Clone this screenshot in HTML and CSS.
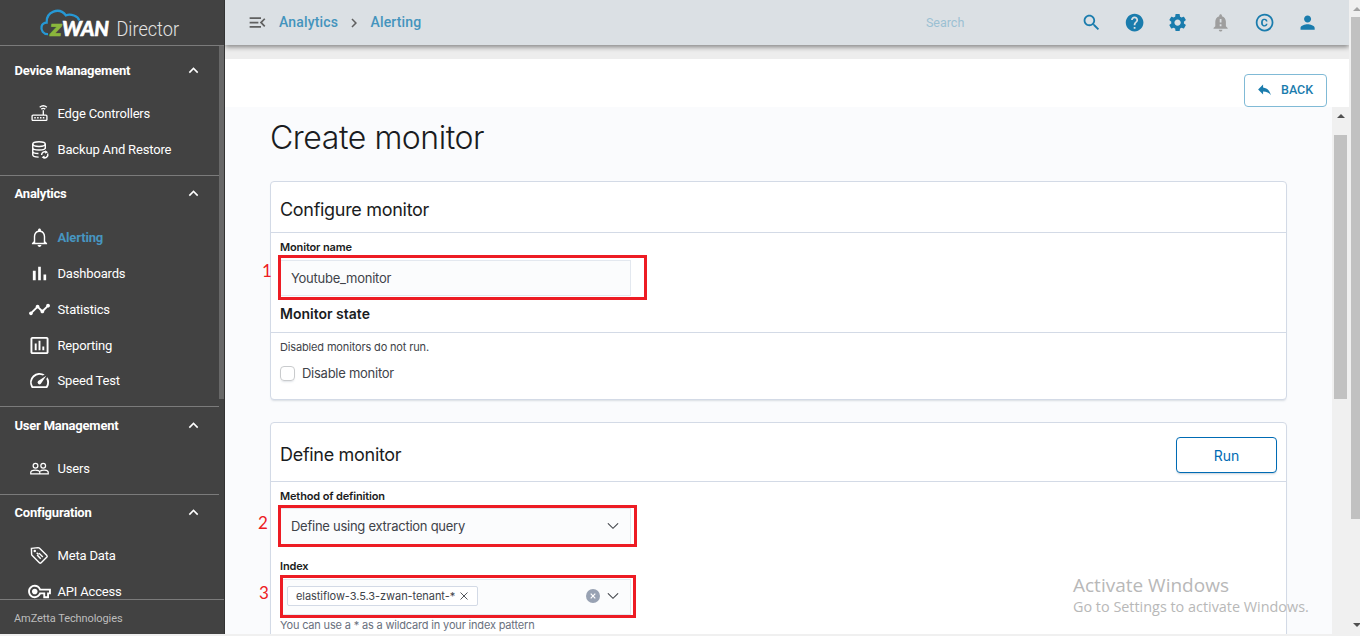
FILE: index.html
```html
<!DOCTYPE html>
<html lang="en">
<head>
<meta charset="utf-8">
<title>zWAN Director - Create monitor</title>
<link rel="stylesheet" href="styles.css">
</head>
<body>
<svg class="defs" width="0" height="0">
  <symbol id="up" viewBox="0 0 24 24"><path d="M12 8l-6 6 1.41 1.41L12 10.83l4.59 4.58L18 14z"/></symbol>
  <symbol id="down" viewBox="0 0 16 16"><path d="M2.5 5.3L8 10.7l5.5-5.4" fill="none" stroke="currentColor" stroke-width="1.2" stroke-linecap="round"/></symbol>
</svg>
<div class="app">
  <aside class="sidebar">
    <div class="brand">
      <svg class="logo" width="150" height="38" viewBox="0 0 150 38">
        <path d="M10 30.200C5.500 30.300 2.600 26.500 3.600 22.300 4.300 20 6.500 18.600 8.600 18.600 8 8 21 2.500 27.800 11.300 33 9.500 40 12 41.300 16.500" fill="none" stroke="#2698d5" stroke-width="2.300"/>
        <text class="logo-z" x="12" y="31.700" textLength="12" lengthAdjust="spacingAndGlyphs">z</text>
        <text class="logo-wan" x="24" y="31.700" textLength="47" lengthAdjust="spacingAndGlyphs">WAN</text>
        <text class="logo-dir" x="78.500" y="31.700" textLength="62.500" lengthAdjust="spacingAndGlyphs">Director</text>
      </svg>
    </div>
    <nav class="nav">
      <div class="groups">
        <section class="group first">
          <div class="group-head"><span>Device Management</span><svg class="chev"><use href="#up"/></svg></div>
          <a class="item"><svg viewBox="0 0 20 20"><path d="M3.200 11.700h13.600a1 1 0 0 1 1 1v3.600a1 1 0 0 1-1 1H3.200a1 1 0 0 1-1-1v-3.600a1 1 0 0 1 1-1zM14 11.500V6.500M11.900 5.400q2.100-1.700 4.200 0M10.200 3.400q3.800-3 7.600 0" fill="none" stroke="currentColor" stroke-width="1.400"/><path d="M4.500 13.800h1.600v1.500H4.500zm3 0h1.600v1.500H7.500zm3 0h1.600v1.500h-1.600zm3 0h1.600v1.500h-1.600z"/></svg><span>Edge Controllers</span></a>
          <a class="item"><svg viewBox="0 0 20 20"><g fill="none" stroke="currentColor" stroke-width="1.500"><ellipse cx="9.500" cy="4.300" rx="6.600" ry="2.500"/><path d="M2.900 4.300v11.200c0 1.300 2.800 2.400 6.200 2.500M16.100 4.300v5M2.900 8.100c0 3.300 13.200 3.300 13.200 0M2.900 11.900c0 1.500 2.800 2.400 6 2.400M12.200 15.700a3.300 3.300 0 0 1 5-2.900M18.600 14.300a3.300 3.300 0 0 1-5 3.800"/></g><path d="M16 10.800l3 2-3 1.600zM15.300 16.300v3.700l-3-1.900z"/></svg><span>Backup And Restore</span></a>
        </section>
        <section class="group analytics">
          <div class="group-head"><span>Analytics</span><svg class="chev"><use href="#up"/></svg></div>
          <a class="item active"><svg viewBox="2 2 20 20"><path d="M12 22c1.100 0 2-.900 2-2h-4c0 1.100.900 2 2 2zm6-6v-5c0-3.070-1.630-5.640-4.500-6.320V4c0-.830-.670-1.500-1.500-1.500s-1.500.670-1.500 1.500v.680C7.640 5.360 6 7.920 6 11v5l-2 2v1h16v-1l-2-2zm-1.500 1.400h-9V11c0-2.800 1.800-4.900 4.500-4.900s4.500 2.100 4.500 4.900v6.400z"/></svg><span>Alerting</span></a>
          <a class="item"><svg viewBox="2 2 20 20"><path d="M5 9.200h3V19H5zM10.600 5h2.800v14h-2.800zm5.600 8H19v6h-2.800z"/></svg><span>Dashboards</span></a>
          <a class="item"><svg viewBox="2 2 20 20"><path d="M23 8c0 1.100-.900 2-2 2-.180 0-.350-.020-.510-.070l-3.560 3.550c.050.160.070.340.070.520 0 1.100-.900 2-2 2s-2-.900-2-2c0-.180.020-.360.070-.520l-2.550-2.550c-.160.050-.340.070-.520.070s-.360-.020-.520-.070l-4.550 4.560c.050.160.070.330.070.510 0 1.100-.900 2-2 2s-2-.900-2-2 .900-2 2-2c.180 0 .350.020.510.070l4.560-4.550C8.020 9.360 8 9.180 8 9c0-1.100.900-2 2-2s2 .900 2 2c0 .180-.020.360-.070.520l2.550 2.550c.160-.050.340-.070.520-.070s.360.020.520.070l3.550-3.560C19.020 8.350 19 8.180 19 8c0-1.100.900-2 2-2s2 .900 2 2z"/></svg><span>Statistics</span></a>
          <a class="item"><svg viewBox="2 2 20 20"><path d="M9 17H7v-7h2v7zm4 0h-2V7h2v10zm4 0h-2v-4h2v4zm2.500 2.100h-15V5h15v14.100zm0-16.100h-15c-1.100 0-2 .900-2 2v14c0 1.100.900 2 2 2h15c1.100 0 2-.900 2-2V5c0-1.100-.900-2-2-2z"/></svg><span>Reporting</span></a>
          <a class="item speed"><svg viewBox="2 2 20 20"><path d="M20.380 8.570l-1.230 1.850a8 8 0 0 1-.220 7.580H5.070A8 8 0 0 1 15.580 6.850l1.850-1.230A10 10 0 0 0 3.350 19a2 2 0 0 0 1.720 1h13.850a2 2 0 0 0 1.740-1 10 10 0 0 0-.270-10.440zm-9.790 6.840a2 2 0 0 0 2.830 0l5.660-8.490-8.490 5.660a2 2 0 0 0 0 2.830z"/></svg><span>Speed Test</span></a>
        </section>
        <section class="group">
          <div class="group-head"><span>User Management</span><svg class="chev"><use href="#up"/></svg></div>
          <a class="item"><svg viewBox="0 0 20 20"><g fill="none" stroke="currentColor" stroke-width="1.300"><circle cx="5.800" cy="7" r="2.500"/><circle cx="13.900" cy="7" r="2.500"/><path d="M.8 15.700v-1.500c0-3.400 9.500-3.400 9.500 0v1.500zM10.300 15.700h8.900v-1.500c0-2.900-6.500-3.400-8.500-1.300"/></g></svg><span>Users</span></a>
        </section>
        <section class="group last">
          <div class="group-head"><span>Configuration</span><svg class="chev"><use href="#up"/></svg></div>
          <a class="item"><svg viewBox="0 0 20 20"><g fill="none" stroke="currentColor" stroke-width="1.500"><path d="M1.500 2.500l7-.8q.8 0 1.300.4l8 8q.6.700 0 1.400l-6.300 6.300q-.7.600-1.400 0l-8-8q-.4-.5-.4-1.100z"/><path d="M7.500 9.500l3.800 4M9.500 7.500l4 4.200M7 7l2 2"/></g><circle cx="5" cy="5.300" r="1.300"/></svg><span>Meta Data</span></a>
          <a class="item key"><svg viewBox="1 2 22 20"><path d="M22 19h-6v-4h-2.680c-1.140 2.420-3.600 4-6.320 4-3.860 0-7-3.140-7-7s3.140-7 7-7c2.720 0 5.170 1.580 6.320 4H24v6h-2v4zm-4-2h2v-4h2v-2H11.940l-.230-.670C11.010 8.340 9.110 7 7 7c-2.760 0-5 2.240-5 5s2.240 5 5 5c2.110 0 4.010-1.340 4.710-3.330l.230-.670H18v4zM7 15c-1.650 0-3-1.350-3-3s1.350-3 3-3 3 1.350 3 3-1.350 3-3 3z"/></svg><span>API Access</span></a>
        </section>
      </div>
      <div class="nav-scroll"></div>
    </nav>
    <footer class="side-foot">AmZetta Technologies</footer>
  </aside>

  <main class="main">
    <header class="topbar">
      <svg class="menu" viewBox="0 0 24 24"><path d="M3 18h13v-2H3v2zm0-5h10v-2H3v2zm0-7v2h13V6H3zm18 9.590L17.420 12 21 8.410 19.590 7l-5 5 5 5L21 15.590z"/></svg>
      <a class="crumb c1">Analytics</a>
      <svg class="sep" viewBox="0 0 24 24"><path d="M10 6L8.590 7.410 13.170 12l-4.580 4.590L10 18l6-6z"/></svg>
      <a class="crumb c2">Alerting</a>
      <span class="search">Search</span>
      <div class="tools">
        <svg viewBox="0 0 24 24"><path d="M15.500 14h-.790l-.280-.270C15.410 12.590 16 11.110 16 9.500 16 5.910 13.090 3 9.500 3S3 5.910 3 9.500 5.910 16 9.500 16c1.610 0 3.090-.590 4.230-1.570l.270.280v.790l5 4.990L20.490 19l-4.990-5zm-6 0C7.010 14 5 11.990 5 9.500S7.010 5 9.500 5 14 7.010 14 9.500 11.990 14 9.500 14z"/></svg>
        <svg viewBox="0 0 24 24"><path d="M12 2C6.480 2 2 6.480 2 12s4.480 10 10 10 10-4.480 10-10S17.520 2 12 2zm1 17h-2v-2h2v2zm2.070-7.750l-.900.920C13.450 12.900 13 13.500 13 15h-2v-.500c0-1.100.450-2.100 1.170-2.830l1.240-1.260c.370-.360.590-.860.590-1.410 0-1.100-.900-2-2-2s-2 .900-2 2H8c0-2.210 1.790-4 4-4s4 1.790 4 4c0 .880-.360 1.680-.930 2.250z"/></svg>
        <svg viewBox="0 0 24 24"><path d="M19.140 12.940c.040-.300.060-.610.060-.940 0-.320-.020-.640-.070-.940l2.030-1.580c.180-.140.230-.410.120-.610l-1.920-3.320c-.120-.220-.370-.290-.590-.220l-2.390.960c-.500-.380-1.030-.700-1.620-.940l-.360-2.540c-.040-.240-.240-.410-.480-.410h-3.840c-.240 0-.430.170-.470.410l-.360 2.540c-.590.240-1.130.570-1.620.940l-2.390-.960c-.220-.080-.470 0-.590.220L2.740 8.870c-.120.210-.080.470.120.610l2.030 1.580c-.050.300-.090.630-.090.940s.020.640.070.940l-2.030 1.580c-.180.140-.230.410-.120.610l1.920 3.320c.120.220.370.290.590.220l2.390-.960c.500.380 1.030.700 1.620.940l.360 2.540c.050.240.240.410.480.410h3.840c.240 0 .440-.170.470-.410l.360-2.540c.590-.240 1.130-.560 1.620-.940l2.390.960c.220.080.470 0 .590-.220l1.920-3.320c.120-.220.070-.470-.120-.610l-2.010-1.580zM12 15.600c-1.980 0-3.600-1.620-3.600-3.600s1.620-3.600 3.600-3.600 3.600 1.620 3.600 3.600-1.620 3.600-3.600 3.600z"/></svg>
        <svg class="muted" viewBox="0 0 24 24"><path d="M18 16v-5c0-3.070-1.640-5.640-4.500-6.320V4c0-.830-.670-1.500-1.500-1.500s-1.500.670-1.500 1.500v.680C7.630 5.360 6 7.920 6 11v5l-2 2v1h16v-1l-2-2zm-5 0h-2v-2h2v2zm0-4h-2V8h2v4zm-1 10c1.100 0 2-.900 2-2h-4c0 1.100.890 2 2 2z"/></svg>
        <svg viewBox="0 0 24 24"><path d="M10.080 10.860c.050-.330.160-.620.300-.870s.340-.460.590-.620c.240-.150.540-.220.910-.230.230.010.440.050.630.130.200.090.380.210.520.360s.250.330.340.530.130.420.140.640h1.790c-.020-.470-.110-.900-.280-1.290s-.400-.730-.700-1.010-.660-.500-1.080-.660-.880-.230-1.390-.230c-.650 0-1.220.110-1.700.340s-.880.530-1.200.920-.560.840-.710 1.360S8 11.290 8 11.870v.270c0 .580.080 1.120.230 1.640s.390.970.710 1.350.720.690 1.200.910 1.050.340 1.700.340c.470 0 .910-.080 1.320-.230s.770-.360 1.080-.630.560-.580.740-.940.290-.740.300-1.150h-1.790c-.010.210-.060.400-.150.580s-.210.330-.360.460-.320.230-.520.300c-.190.070-.390.090-.600.100-.360-.010-.660-.080-.890-.230-.250-.160-.450-.370-.590-.620s-.250-.550-.300-.880-.080-.670-.080-1v-.270c0-.350.030-.680.080-1.010zM12 2C6.480 2 2 6.480 2 12s4.480 10 10 10 10-4.480 10-10S17.520 2 12 2zm0 18c-4.410 0-8-3.590-8-8s3.590-8 8-8 8 3.590 8 8-3.590 8-8 8z"/></svg>
        <svg viewBox="0 0 24 24"><path d="M12 12c2.210 0 4-1.790 4-4s-1.790-4-4-4-4 1.790-4 4 1.790 4 4 4zm0 2c-2.670 0-8 1.340-8 4v2h16v-2c0-2.660-5.330-4-8-4z"/></svg>
      </div>
    </header>
    <div class="actionbar">
      <button class="back"><svg viewBox="0 0 24 24"><path d="M10 9V5l-7 7 7 7v-4.100c5 0 8.500 1.600 11 5.100-1-5-4-10-11-11z"/></svg><span>BACK</span></button>
    </div>
    <div class="frame">
      <div class="content">
        <h1><span>Create monitor</span></h1>
        <section class="card configure">
          <div class="card-head"><h2>Configure monitor</h2></div>
          <div class="card-body">
            <label class="label">Monitor name</label>
            <div class="field name"><span>Youtube_monitor</span><i class="mark m1"></i><b class="num n1">1</b></div>
            <h3><span>Monitor state</span></h3>
            <p class="note"><span>Disabled monitors do not run.</span></p>
            <div class="check"><i class="box"></i><span>Disable monitor</span></div>
          </div>
        </section>
        <section class="card define">
          <div class="card-head"><h2>Define monitor</h2><button class="run">Run</button></div>
          <div class="card-body">
            <label class="label">Method of definition</label>
            <div class="field method"><span>Define using extraction query</span><svg class="arrow"><use href="#down"/></svg><i class="mark m2"></i><b class="num n2">2</b></div>
            <label class="label l-index">Index</label>
            <div class="field index">
              <span class="pill"><span>elastiflow-3.5.3-zwan-tenant-*</span><svg viewBox="0 0 8 8"><path d="M.5.5l7 7m0-7l-7 7" stroke="currentColor" stroke-width=".9"/></svg></span>
              <svg class="clear" viewBox="0 0 14 14"><circle cx="7" cy="7" r="7" fill="#98a2b3"/><path d="M4.700 4.700l4.600 4.600m0-4.600l-4.600 4.600" stroke="#fff" stroke-width="1.200"/></svg>
              <svg class="arrow"><use href="#down"/></svg><i class="mark m3"></i><b class="num n3">3</b>
            </div>
            <p class="help"><span>You can use a * as a wildcard in your index pattern</span></p>
          </div>
        </section>
      </div>
      <div class="inner-scroll"><i class="tri"></i><i class="thumb"></i></div>
    </div>
  </main>
  <div class="page-scroll"><i class="tri"></i><i class="thumb"></i><i class="tri bottom"></i></div>
  <div class="watermark"><div class="w1">Activate Windows</div><div class="w2">Go to Settings to activate Windows.</div></div>
</div>
</body>
</html>
```
FILE: styles.css
```css
* { box-sizing: border-box; }
body { margin: 0; background: #f0f0f0; overflow: hidden; font-family: Roboto, "Liberation Sans", sans-serif; }
h1, h2, h3, p { margin: 0; font-weight: 400; }
svg { display: block; fill: currentColor; flex: none; }
span { white-space: nowrap; }
i { display: block; font-style: normal; }
button { font: inherit; background: #fff; padding: 0; }
.defs { position: absolute; }
.app { display: flex; width: 1360px; height: 636px; position: relative; }

/* Sidebar */
.sidebar { width: 225px; height: 634px; background: #424242; color: #fff; display: flex; flex-direction: column; border-right: 1px solid #333; }
.brand { height: 46px; border-bottom: 1px solid #7b7b7b; padding: 4px 0 0 38px; flex: none; }
.logo-z, .logo-wan { font: italic 900 21.500px Lato, sans-serif; fill: #fff; stroke: #fff; stroke-width: .6px; }
.logo-z { font-size: 23px; fill: #8bb63c; stroke: #8bb63c; }
.logo-dir { font: 300 20px Roboto, sans-serif; fill: #e4e4e4; }
.nav { flex: 1; min-height: 0; overflow: hidden; display: flex; }
.groups { width: 219px; }
.nav-scroll { width: 5px; height: 353px; background: #686868; }
.group { border-bottom: 1px solid #7b7b7b; padding-bottom: 7px; }
.group.first { padding: 6px 0 8px; }
.group:nth-child(3) { padding-bottom: 8px; }
.group.last { border: 0; margin-top: -1px; }
.group-head { height: 36px; margin-bottom: 7px; padding: 0 16px 0 14.500px; display: flex; align-items: center; justify-content: space-between; font-size: 13px; font-weight: 700; letter-spacing: -.22px; }
.analytics .group-head { height: 34px; margin-bottom: 9px; }
.chev { width: 19px; height: 19px; }
.item { height: 36px; padding-left: 30px; display: flex; align-items: center; gap: 8.500px; font-size: 13px; letter-spacing: -.17px; }
.item svg { width: 19px; height: 19px; overflow: visible; }
.item.active span { color: #4795c0; font-weight: 700; letter-spacing: -.15px; }
.speed { padding-bottom: 2px; }
.key svg { width: 21px; margin: 0 -1px; }
.side-foot { height: 35px; flex: none; border-top: 1px solid #7b7b7b; padding: 3px 0 0 14px; display: flex; align-items: center; font-size: 11px; color: #bdbdbd; letter-spacing: -.08px; }

/* Header */
.main { width: 1124px; height: 634px; display: flex; flex-direction: column; background: #ededed; }
.topbar { height: 45px; margin-bottom: 14px; flex: none; background: #dbe0e4; box-shadow: 0 2px 5px rgba(0,0,0,.45); display: flex; align-items: center; padding: 0 31px 0 22px; color: #1a7cad; clip-path: inset(0 0 -14px 0); }
.menu { width: 21px; height: 21px; color: #606060; }
.crumb { font-size: 14px; font-weight: 500; color: #4494bd; letter-spacing: .15px; padding-bottom: 2px; }
.c1 { margin-left: 11px; width: 60px; }
.sep { width: 18px; height: 18px; color: #606060; margin: 0 7.500px 0 6px; }
.search { margin-left: auto; width: 149px; font-size: 12.500px; color: #9bc0d3; }
.tools { display: flex; gap: 22px; margin-left: 6px; }
.tools svg { width: 21.200px; height: 21.200px; }
.tools .muted { color: #9e9e9e; }
.actionbar { height: 48px; flex: none; background: #fff; padding: 15px 22px 0 0; display: flex; justify-content: flex-end; }
.back { width: 83px; height: 33px; border: 1px solid #80bad6; border-radius: 4px; color: #1a7cad; display: flex; align-items: center; padding-left: 11px; gap: 8px; font-size: 12.500px; font-weight: 500; padding-bottom: 2px; }
.back svg { width: 17px; height: 17px; }

/* Monitor form */
.frame { flex: 1; min-height: 0; display: flex; background: #fafbfd; overflow: hidden; font-family: Inter, sans-serif; }
.content { width: 1107px; padding: 0 45px; flex: none; }
h1 { height: 74px; padding-top: 11px; line-height: 40px; font-size: 32px; font-weight: 300; color: #1a1c21; letter-spacing: -.45px; }
.card { width: 1017px; background: #fff; border: 1px solid #d3dae6; border-radius: 4px; box-shadow: 0 2px 2px -1px rgba(152,162,179,.35); }
.card-head { display: flex; justify-content: space-between; align-items: center; padding: 0 9px; border-bottom: 1px solid #d3dae6; }
.card-body { padding: 0 9px; }
h2 { font-size: 18px; color: #1a1c21; letter-spacing: -.3px; }
.configure { height: 219px; margin-bottom: 22px; }
.configure .card-head { height: 51px; padding-top: 5px; }
.define { height: 300px; }
.define .card-head { height: 59px; padding-top: 5px; }
.run { width: 101px; height: 36px; margin-top: 1px; padding-top: 1px; border: 1px solid #006bb4; border-radius: 4px; color: #006bb4; font-size: 14px; box-shadow: 0 2px 2px -1px rgba(54,97,126,.3); }
.label { display: block; height: 27px; line-height: 28px; font-size: 11px; font-weight: 600; color: #1a1c21; white-space: nowrap; letter-spacing: -.14px; }
.field { position: relative; width: 351px; height: 36px; border: 1px solid #e3e8ef; background: #fbfcfd; display: flex; align-items: center; padding: 0 10px; font-size: 13px; color: #404349; letter-spacing: -.26px; }
.mark { position: absolute; border: 3px solid #ed1c24; }
.m1 { left: -3px; top: -6px; width: 369px; height: 45px; }
.m2 { left: -3px; top: -4px; width: 359px; height: 42px; }
.m3 { left: -1px; top: -5px; width: 356px; height: 43px; }
.num { position: absolute; font: 400 17px/20px Lato, sans-serif; color: #ed1c24; }
.n1 { left: -19px; top: 0; }
.n2 { left: -23px; top: 4px; }
.n3 { left: -22px; top: 3px; }
h3 { height: 37px; margin: 0 -9px; padding: 0 9px; line-height: 36px; border-bottom: 1px solid #d3dae6; font-size: 14px; font-weight: 600; color: #1a1c21; }
.note { height: 28px; line-height: 29px; font-size: 11px; color: #404349; letter-spacing: -.15px; }
.check { display: flex; align-items: center; gap: 7px; height: 24px; font-size: 13px; color: #404349; letter-spacing: -.26px; }
.box { width: 15px; height: 15px; border: 1px solid #c9cbcd; border-radius: 4px; box-shadow: 0 2px 2px -1px rgba(152,162,179,.3); }
.arrow { width: 14px; height: 14px; margin-left: auto; }
.method { height: 37px; margin-top: -1px; padding-bottom: 2px; }
.l-index { height: 34px; line-height: 43px; }
.index { padding: 0 10px 2px 6px; }
.pill { height: 20px; width: 191px; border: 1px solid #d3dae6; border-radius: 2px; background: #fff; display: flex; align-items: center; padding-left: 8px; gap: 5px; font-size: 11px; letter-spacing: -.06px; }
.pill svg { width: 8px; height: 8px; }
.clear { width: 14px; height: 14px; margin-left: auto; }
.index .arrow { margin-left: 6px; }
.help { font-size: 11px; line-height: 20px; color: #69707d; letter-spacing: -.17px; }

/* Scrollbars */
.inner-scroll { width: 17px; background: #f0f0f0; padding: 7px 2px 0; }
.tri { width: 0; height: 0; border: 4px solid transparent; border-top: 0; border-bottom-color: #505050; margin: 0 auto; }
.inner-scroll .thumb { width: 13px; height: 264px; margin-top: 17px; background: #c1c1c1; }
.page-scroll { width: 11px; height: 636px; padding: 7px 0 0 2px; background: #f0f0f0; overflow: hidden; }
.page-scroll .tri { border-bottom-color: #a3a3a3; margin-left: 2px; }
.page-scroll .thumb { height: 502px; margin-top: 6px; background: #c1c1c1; }
.page-scroll .bottom { transform: rotate(180deg); border-bottom-color: #505050; margin-top: 104px; }

/* Desktop activation notice */
.watermark { position: absolute; left: 1073px; top: 573px; font-family: "Open Sans", sans-serif; color: #b8b8b8; white-space: nowrap; }
.w1 { font-size: 19px; line-height: 24px; }
.w2 { font-size: 14.400px; line-height: 20px; }
```
